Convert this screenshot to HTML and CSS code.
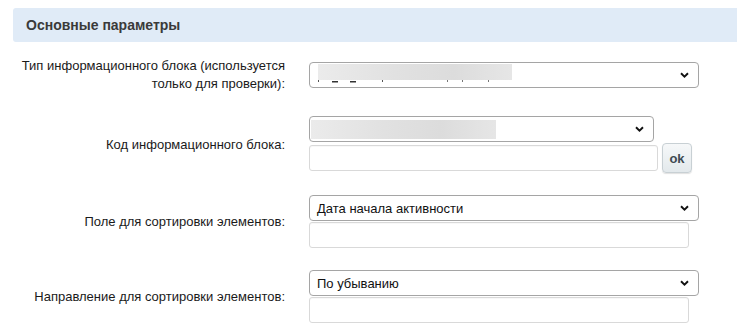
FILE: index.html
```html
<!DOCTYPE html>
<html lang="ru">
<head>
<meta charset="utf-8">
<title>Основные параметры</title>
<link rel="stylesheet" href="styles.css">
</head>
<body>
<div class="section-head">Основные параметры</div>
<div class="form">
  <div class="row row-first">
    <div class="label">Тип информационного блока (используется<br>только для проверки):</div>
    <div class="control">
      <div class="select select-wide">
        <span class="value">
          <span class="blur blur-1"></span>
          <svg class="marks" width="180" height="3" viewBox="0 0 180 3">
            <rect x="0" y="0" width="1" height="2" fill="#555"/>
            <rect x="14" y="1" width="6" height="1.5" fill="#333"/>
            <rect x="32" y="1" width="6" height="1.5" fill="#333"/>
            <rect x="64" y="0" width="1" height="2" fill="#555"/>
            <rect x="129" y="0" width="1" height="2" fill="#777"/>
            <rect x="144" y="0" width="1" height="2" fill="#777"/>
            <rect x="170" y="0" width="1" height="2" fill="#777"/>
          </svg>
        </span>
        <svg class="chev" width="9" height="6" viewBox="0 0 9 6"><path d="M1 1.2 L4.5 4.6 L8 1.2" fill="none" stroke="#111" stroke-width="1.9"/></svg>
      </div>
    </div>
  </div>
  <div class="row row-second">
    <div class="label">Код информационного блока:</div>
    <div class="control">
      <div class="select select-mid">
        <span class="value"><span class="blur blur-2"></span></span>
        <svg class="chev" width="9" height="6" viewBox="0 0 9 6"><path d="M1 1.2 L4.5 4.6 L8 1.2" fill="none" stroke="#111" stroke-width="1.9"/></svg>
      </div>
      <div class="input-line">
        <div class="input input-mid"></div>
        <button class="btn" type="button">ok</button>
      </div>
    </div>
  </div>
  <div class="row">
    <div class="label">Поле для сортировки элементов:</div>
    <div class="control">
      <div class="select select-wide">
        <span class="value">Дата начала активности</span>
        <svg class="chev" width="9" height="6" viewBox="0 0 9 6"><path d="M1 1.2 L4.5 4.6 L8 1.2" fill="none" stroke="#111" stroke-width="1.9"/></svg>
      </div>
      <div class="input input-wide input-under"></div>
    </div>
  </div>
  <div class="row">
    <div class="label">Направление для сортировки элементов:</div>
    <div class="control">
      <div class="select select-wide">
        <span class="value">По убыванию</span>
        <svg class="chev" width="9" height="6" viewBox="0 0 9 6"><path d="M1 1.2 L4.5 4.6 L8 1.2" fill="none" stroke="#111" stroke-width="1.9"/></svg>
      </div>
      <div class="input input-wide input-under"></div>
    </div>
  </div>
</div>
</body>
</html>
```

FILE: styles.css
```css
html, body {
  margin: 0;
  padding: 0;
  background: #fff;
}

body {
  font-family: "Liberation Sans", Arial, sans-serif;
  font-size: 13px;
  color: #000;
}

.section-head {
  margin: 8px 0 0 13px;
  height: 34px;
  line-height: 35px;
  padding-left: 13px;
  background: #e0ebf7;
  border-radius: 3px 0 0 3px;
  font-weight: bold;
  font-size: 14px;
  color: #3a3a3a;
}

.form {
  display: flex;
  flex-direction: column;
}

.row {
  display: grid;
  grid-template-columns: 285px 1fr;
  column-gap: 24px;
  align-items: center;
  margin-top: 22px;
}

.row-first {
  margin-top: 15px;
}

.row-second {
  margin-top: 23px;
}

.label {
  text-align: right;
  line-height: 18px;
  color: #1a1a1a;
}

.control {
  display: flex;
  flex-direction: column;
  align-items: flex-start;
}

.select {
  box-sizing: border-box;
  height: 26px;
  border: 1px solid #a5a5a5;
  border-radius: 4px;
  background: #fff;
  display: flex;
  align-items: center;
  justify-content: space-between;
  padding: 0 9px 0 7px;
  color: #111;
}

.select-wide { width: 390px; }
.select-mid { width: 345px; }

.value {
  position: relative;
  display: flex;
  align-items: center;
  height: 100%;
}

.chev {
  display: block;
  flex: none;
}

.blur {
  display: block;
  background: linear-gradient(to right, #ebebeb 0%, #e1e1e1 40%, #dcdcdc 70%, #e6e6e6 100%);
  filter: blur(0.6px);
}

.blur-1 {
  width: 194px;
  height: 16px;
  margin-left: 1px;
  margin-top: -6px;
}

.blur-2 {
  width: 185px;
  height: 19px;
  margin-left: -6px;
}

.marks {
  position: absolute;
  left: 1px;
  top: 17px;
}

.input {
  box-sizing: border-box;
  height: 26px;
  border: 1px solid #d9d9d9;
  border-radius: 3px;
  background: #fff;
  box-shadow: inset 0 1px 1px rgba(0, 0, 0, 0.03);
}

.input-wide { width: 380px; }
.input-mid { width: 349px; }

.input-under {
  margin-top: 1px;
}

.input-line {
  display: flex;
  align-items: center;
  gap: 4px;
  margin-top: 1px;
}

.btn {
  box-sizing: border-box;
  width: 30px;
  height: 30px;
  padding: 0;
  border: 1px solid #c8d0d4;
  border-radius: 4px;
  background: linear-gradient(to bottom, #f6f8f9 0%, #e3e9ec 100%);
  box-shadow: 0 1px 1px rgba(0, 0, 0, 0.12);
  font-family: "Liberation Sans", Arial, sans-serif;
  font-weight: bold;
  font-size: 13px;
  color: #3f4a52;
}
```
